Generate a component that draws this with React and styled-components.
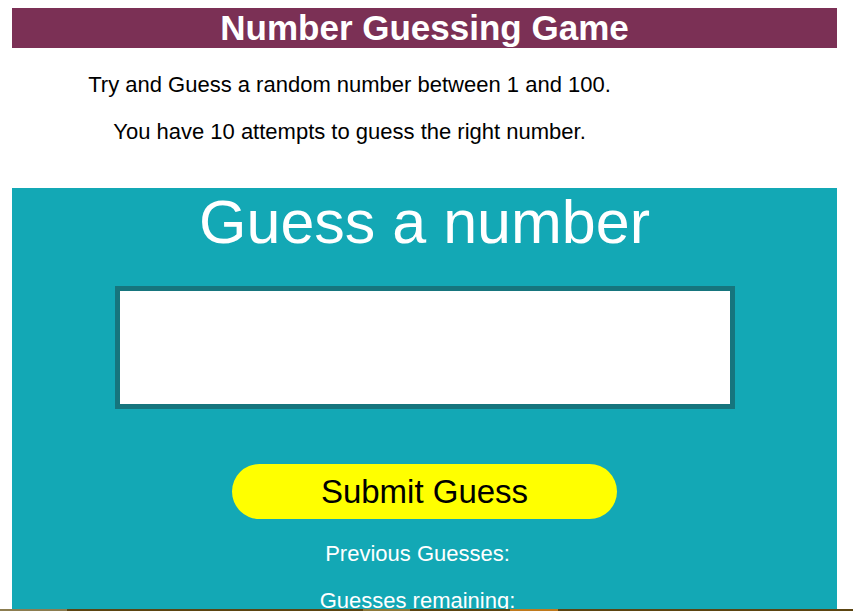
import React, { useState } from 'react';
import styled, { createGlobalStyle } from 'styled-components';

const GlobalStyle = createGlobalStyle`
  html, body {
    margin: 0;
    padding: 0;
    background: #ffffff;
  }
  body {
    font-family: "Liberation Sans", Arial, sans-serif;
  }
`;

const Page = styled.div`
  padding: 8px 16px 0 12px;
`;

const Header = styled.h1`
  margin: 0;
  background: #7b3055;
  color: #ffffff;
  font-size: 35px;
  font-weight: 700;
  line-height: 40px;
  text-align: center;
`;

const Intro = styled.div`
  width: 675px;
  text-align: center;
  padding-top: 2px;
`;

const Text = styled.p`
  margin: 22px 0;
  font-size: 22px;
  line-height: 25px;
  color: ${(p) => (p.light ? '#ffffff' : '#000000')};
`;

const Game = styled.section`
  margin-top: 44px;
  background: #13a8b5;
  display: flex;
  flex-direction: column;
  align-items: center;
  padding-bottom: 40px;
  text-align: center;
`;

const Title = styled.h2`
  margin: 0;
  font-size: 61px;
  font-weight: 400;
  line-height: 69px;
  color: #ffffff;
`;

const GuessInput = styled.input`
  box-sizing: border-box;
  margin-top: 29px;
  width: 620px;
  height: 123px;
  border: 5px solid #16757d;
  background: #ffffff;
  font-family: inherit;
  font-size: 40px;
  text-align: center;
  outline: none;
`;

const SubmitButton = styled.button`
  margin-top: 55px;
  width: 385px;
  height: 55px;
  border: none;
  border-radius: 28px;
  background: #ffff00;
  color: #000000;
  font-family: inherit;
  font-size: 33px;
  cursor: pointer;
`;

const Info = styled.div`
  padding-right: 14px;
`;

const Footer = styled.div`
  position: fixed;
  left: 0;
  right: 0;
  bottom: 0;
  height: 2px;
  background: linear-gradient(
    to right,
    #8c7d50 0,
    #8c7d50 67px,
    #5c4512 67px,
    #5c4512 363px,
    #8f7a3a 363px,
    #8f7a3a 410px,
    #5c4512 410px,
    #5c4512 510px,
    #c07a1e 510px,
    #c07a1e 558px,
    #5c4512 558px
  );
`;

export default function App() {
  const [guess, setGuess] = useState('');
  return (
    <>
      <GlobalStyle />
      <Page>
        <Header>Number Guessing Game</Header>
        <Intro>
          <Text>Try and Guess a random number between 1 and 100.</Text>
          <Text>You have 10 attempts to guess the right number.</Text>
        </Intro>
        <Game>
          <Title>Guess a number</Title>
          <GuessInput
            type="text"
            value={guess}
            onChange={(e) => setGuess(e.target.value)}
          />
          <SubmitButton type="button">Submit Guess</SubmitButton>
          <Info>
            <Text light>Previous Guesses:</Text>
            <Text light>Guesses remaining:</Text>
          </Info>
        </Game>
      </Page>
      <Footer />
    </>
  );
}
